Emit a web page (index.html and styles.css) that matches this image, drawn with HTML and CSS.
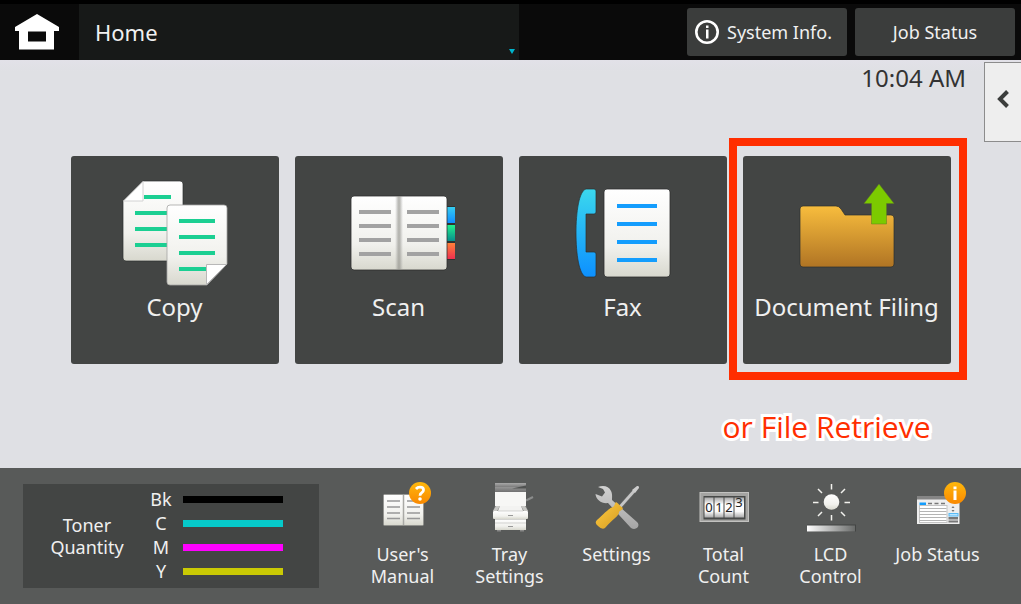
FILE: index.html
```html
<!DOCTYPE html>
<html lang="en">
<head>
  <meta charset="UTF-8" />
  <meta name="viewport" content="width=device-width, initial-scale=1.0" />
  <title>Home</title>
  <link rel="stylesheet" href="styles.css">
</head>
<body>
  <header class="topbar">
    <button class="home-btn" aria-label="Home">
      <svg width="46" height="40" viewBox="0 0 46 40">
        <path fill="#fff" fill-rule="evenodd" d="M23 2 L45 15 V19 H40 V37.500 H5 V19 H1 V15 Z M14 19.500 V29.500 H32 V19.500 Z" />
      </svg>
    </button>
    <button class="title-btn">
      <span>Home</span>
      <svg class="title-arrow" width="6" height="5" viewBox="0 0 6 5"><path fill="#00b4cc" d="M0 0 H6 L3 5 Z" /></svg>
    </button>
    <div class="top-actions">
      <button class="top-btn info-btn">
        <svg width="24" height="24" viewBox="0 0 24 24">
          <circle cx="12" cy="12" r="10.7" fill="none" stroke="#fff" stroke-width="2.6" />
          <path fill="#fff" d="M11 5.500h2.500v2.500h-2.500z M11 9.500h2.500v9h-2.500z" />
        </svg>
        System Info.
      </button>
      <button class="top-btn">Job Status</button>
    </div>
  </header>

  <main class="desktop">
    <div class="status-row">
      <time class="clock">10:04 AM</time>
      <button class="drawer" aria-label="Open panel">
        <svg width="14" height="20" viewBox="0 0 14 20"><path fill="none" stroke="#3b3d3c" stroke-width="4" d="M11.500 2.500 L4 10 L11.500 17.500" /></svg>
      </button>
    </div>

    <div class="tiles">
      <button class="tile">
        <svg width="112" height="112" viewBox="0 0 112 112">
          <defs>
            <linearGradient id="paper" x1="0" y1="0" x2="0" y2="1">
              <stop offset="0" stop-color="#fff" />
              <stop offset="0.65" stop-color="#f1f1ed" />
              <stop offset="1" stop-color="#d8d8ce" />
            </linearGradient>
          </defs>
          <path fill="url(#paper)" stroke="#2d2f2e" stroke-width="0.7" d="M24 5 H61 Q64 5 64 8 V85 H7 Q4 85 4 82 V25 Z" />
          <path fill="#fff" stroke="#d2d2d2" d="M24 5.500 V25 H4.500 Z" />
          <path fill="#1bcf92" d="M25 19h27v4H25z M16 35h32v4H16z M16 51h32v4H16z M16 67h32v4H16z" />
          <path fill="url(#paper)" stroke="#a5a5a3" stroke-width="0.8" d="M51 29 H105 Q108 29 108 32 V88 L88 109 H51 Q48 109 48 106 V32 Q48 29 51 29 Z" />
          <path fill="#1bcf92" d="M60 43h36v4H60z M60 59h36v4H60z M60 75h36v4H60z M60 91h28v4H60z" />
          <path fill="#fff" stroke="#b8b8b8" d="M107.500 88.500 H87.500 V108.500 Z" />
        </svg>
        <span class="tile-label">Copy</span>
      </button>
      <button class="tile">
        <svg width="112" height="112" viewBox="0 0 112 112">
          <defs>
            <linearGradient id="tabBlue" x1="0" y1="0" x2="0" y2="1"><stop offset="0" stop-color="#35cdf0" /><stop offset="1" stop-color="#108cff" /></linearGradient>
            <linearGradient id="tabGreen" x1="0" y1="0" x2="0" y2="1"><stop offset="0" stop-color="#22f08c" /><stop offset="1" stop-color="#088e8c" /></linearGradient>
            <linearGradient id="tabRed" x1="0" y1="0" x2="0" y2="1"><stop offset="0" stop-color="#ff8038" /><stop offset="1" stop-color="#ee3050" /></linearGradient>
            <linearGradient id="spine"><stop offset="0" stop-color="#999" stop-opacity="0" /><stop offset="0.4" stop-color="#8e8e88" stop-opacity="0.6" /><stop offset="0.6" stop-color="#8e8e88" stop-opacity="0.6" /><stop offset="1" stop-color="#999" stop-opacity="0" /></linearGradient>
          </defs>
          <path fill="#2f3130" d="M103 30h10v54h-10z" />
          <path fill="url(#tabBlue)" d="M104 31h8v16h-8z" />
          <path fill="url(#tabGreen)" d="M104 49h8v16h-8z" />
          <path fill="url(#tabRed)" d="M104 67h8v16h-8z" />
          <rect x="8" y="20" width="96" height="74" rx="3" fill="url(#paper)" stroke="#2d2f2e" stroke-width="0.8" />
          <rect x="52" y="20" width="8" height="74" fill="url(#spine)" />
          <path fill="#a2a2a2" d="M16 34h32v4H16z M16 48h32v4H16z M16 62h32v4H16z M16 76h32v4H16z M64 34h32v4H64z M64 48h32v4H64z M64 62h32v4H64z M64 76h32v4H64z" />
        </svg>
        <span class="tile-label">Scan</span>
      </button>
      <button class="tile">
        <svg width="112" height="112" viewBox="0 0 112 112">
          <defs>
            <linearGradient id="handset" x1="0" y1="0" x2="0" y2="1"><stop offset="0" stop-color="#3bd8ee" /><stop offset="1" stop-color="#0d90ff" /></linearGradient>
          </defs>
          <path fill="url(#handset)" stroke="#2d2f2e" stroke-width="0.7" d="M19 13 H27 Q29 13 29 15 V36 Q29 38 27 38 H19 V76 H27 Q29 76 29 78 V99 Q29 101 27 101 H19 C12 99 9 78 9 57 S12 15 19 13 Z" />
          <rect x="37" y="13" width="66" height="88" rx="3" fill="url(#paper)" stroke="#2d2f2e" stroke-width="0.8" />
          <path fill="#149dfd" d="M50 28h40v4H50z M50 46h40v4H50z M50 64h40v4H50z M50 82h40v4H50z" />
        </svg>
        <span class="tile-label">Fax</span>
      </button>
      <button class="tile highlighted">
        <svg width="112" height="112" viewBox="0 0 112 112">
          <defs>
            <linearGradient id="folder" x1="0" y1="0" x2="0" y2="1"><stop offset="0" stop-color="#f8bd3d" /><stop offset="1" stop-color="#b07424" /></linearGradient>
          </defs>
          <path fill="url(#folder)" stroke="#2d2f2e" stroke-width="0.7" d="M12 30 H45 Q48 30 50 33 L54 39 H100 Q103 39 103 42 V88 Q103 91 100 91 H12 Q9 91 9 88 V33 Q9 30 12 30 Z" />
          <path fill="#7cca00" stroke="#5d7a20" stroke-width="0.5" d="M88 8 L103 27.500 H95.500 V48 H80.500 V27.500 H73 Z" />
        </svg>
        <span class="tile-label">Document Filing</span>
      </button>
      <p class="note">or File Retrieve</p>
    </div>
  </main>

  <footer class="dock">
    <section class="toner">
      <h2 class="toner-title">Toner Quantity</h2>
      <ul class="toner-list">
        <li><span>Bk</span><i class="bar black"></i></li>
        <li><span>C</span><i class="bar cyan"></i></li>
        <li><span>M</span><i class="bar magenta"></i></li>
        <li><span>Y</span><i class="bar yellow"></i></li>
      </ul>
    </section>

    <nav class="dock-items">
      <button class="dock-btn">
        <svg width="64" height="56" viewBox="0 0 64 56">
          <defs>
            <linearGradient id="badge" x1="0" y1="0" x2="0" y2="1"><stop offset="0" stop-color="#ffb80c" /><stop offset="1" stop-color="#f98800" /></linearGradient>
          </defs>
          <rect x="12.500" y="14.500" width="40" height="31" rx="1" fill="url(#paper)" stroke="#8c8c88" stroke-width="0.6" />
          <path stroke="#a9a9a5" stroke-width="1.500" d="M32.500 15 V45" />
          <path stroke="#989898" stroke-width="1.500" d="M16 21h13 M16 27h13 M16 33h13 M16 38.500h13 M36 21h13 M36 27h13 M36 33h13 M36 38.500h13" />
          <circle cx="49" cy="13" r="11" fill="url(#badge)" />
          <path fill="none" stroke="#fff" stroke-width="2.800" d="M45 9 Q46.500 7.200 49 7.200 Q52.500 7.200 52.500 10 Q52.500 11.500 50.800 12.700 Q49 13.800 49 15.800" />
          <circle cx="49" cy="19" r="1.800" fill="#fff" />
        </svg>
        <span>User's<br>Manual</span>
      </button>
      <button class="dock-btn">
        <svg width="64" height="56" viewBox="0 0 64 56">
          <defs>
            <linearGradient id="lid" x1="0" y1="0" x2="0" y2="1"><stop offset="0" stop-color="#a8a8a8" /><stop offset="0.450" stop-color="#7c7c7c" /><stop offset="0.500" stop-color="#929292" /><stop offset="1" stop-color="#707070" /></linearGradient>
          </defs>
          <path stroke="#8b8d8c" stroke-width="2" d="M48 20.500 L55 17" />
          <path fill="#888" d="M19 50h4v1.500h-4z M42 50h4v1.500h-4z" />
          <rect x="17" y="3" width="31" height="9" fill="url(#lid)" />
          <path fill="#505251" d="M34 8.500 L48 5.500 V8.500 Z" />
          <rect x="17" y="12" width="31" height="14" fill="#f7f7f5" />
          <path fill="#8a8a88" d="M17 26 H48 L50 31 H15 Z" />
          <path fill="#c8c8c5" d="M18 26 L15 31 H19 L22 26 Z M47 26 L50 31 H46 L43 26 Z" />
          <path fill="#f3f3f1" d="M22 26 H43 L45 31 H20 Z" />
          <rect x="15" y="31" width="35" height="8" rx="1" fill="url(#paper)" />
          <rect x="17" y="39" width="31" height="11" fill="url(#paper)" />
          <path stroke="#c2c2be" stroke-width="0.700" d="M20 31h25 M17 39.500h31 M17 43h31" />
          <path stroke="#9a9a9a" d="M30 35.500h5 M30 46.500h5" />
        </svg>
        <span>Tray<br>Settings</span>
      </button>
      <button class="dock-btn">
        <svg width="64" height="56" viewBox="0 0 64 56">
          <defs>
            <linearGradient id="steel" x1="0" y1="0" x2="0" y2="1"><stop offset="0" stop-color="#d2d2d2" /><stop offset="1" stop-color="#a5a5a5" /></linearGradient>
            <linearGradient id="handle" x1="0" y1="0" x2="1" y2="1"><stop offset="0" stop-color="#ffcc42" /><stop offset="1" stop-color="#d49a20" /></linearGradient>
          </defs>
          <path fill="url(#steel)" d="M13 7 C18 5 24 6 26 11 C27.500 14 27 17 27 20 L52 42 C56 46 51 51 46 48 L23 23 C17 24 11 20 10.500 14 L17 16.500 L20 12.500 L18 9 Z" />
          <path stroke="#606261" stroke-width="4.500" d="M36 26 L49 11" />
          <path stroke="#c6c6c6" stroke-width="2.800" d="M34 28 L50 10" />
          <path fill="#cdcdcd" d="M47 10 L52 6 Q54.500 5.500 54 8 L50 13 Z" />
          <path fill="url(#handle)" d="M31 22 C33 23 34 25 38 28 C37 31 35 30 34 32 C34 36 29 38 20 48 Q17 50 13 46 Q9 43 12 40 C20 33 24 28 28 27 C30 26 29 24 31 22 Z" />
        </svg>
        <span>Settings</span>
      </button>
      <button class="dock-btn">
        <svg width="64" height="56" viewBox="0 0 64 56">
          <defs>
            <linearGradient id="wheel" x1="0" y1="0" x2="0" y2="1"><stop offset="0" stop-color="#aaa" /><stop offset="0.350" stop-color="#fff" /><stop offset="0.700" stop-color="#fafafa" /><stop offset="1" stop-color="#aaa" /></linearGradient>
          </defs>
          <rect x="8" y="12.500" width="48.500" height="29" fill="#a4a4a2" stroke="#c2c2c0" />
          <rect x="11.500" y="16" width="42" height="23.500" fill="#484a49" />
          <path fill="url(#wheel)" d="M12.500 17.500h9v20h-9z M22.500 17.500h9v20h-9z M32.500 17.500h9v20h-9z M42.500 17.500h9.500v20h-9.500z" />
          <g class="digits" text-anchor="middle">
            <text x="17" y="32">0</text>
            <text x="27" y="32">1</text>
            <text x="37" y="32">2</text>
            <text x="47" y="27">3</text>
          </g>
        </svg>
        <span>Total<br>Count</span>
      </button>
      <button class="dock-btn">
        <svg width="64" height="56" viewBox="0 0 64 56">
          <defs>
            <linearGradient id="ramp"><stop offset="0" stop-color="#fff" /><stop offset="1" stop-color="#696b6a" /></linearGradient>
          </defs>
          <circle cx="32.500" cy="22" r="7.800" fill="url(#paper)" />
          <path stroke="#f2f2ee" stroke-width="1.500" d="M32.500 4v5.500 M32.500 35v5.500 M14 22.500h5.500 M45.500 22.500h5.500 M19 9l4 4 M46 9l-4 4 M19 36l4-4 M46 36l-4-4" />
          <rect x="8" y="44.500" width="49" height="7" fill="#434544" />
          <rect x="8" y="45.500" width="48" height="6" fill="url(#ramp)" />
        </svg>
        <span>LCD<br>Control</span>
      </button>
      <button class="dock-btn">
        <svg width="64" height="56" viewBox="0 0 64 56">
          <rect x="11" y="16" width="42.500" height="28" fill="#eee" />
          <rect x="11" y="16" width="42.500" height="3.500" fill="#858585" />
          <rect x="13.500" y="22.500" width="6.500" height="2.500" fill="#149dfd" />
          <path stroke="#777" stroke-width="1.300" d="M22 23.500h4 M28.500 23.500h4 M35 23.500h4" />
          <rect x="13.500" y="25.500" width="27.500" height="17" fill="#fff" stroke="#c4c4c4" />
          <path stroke="#b4b4b4" d="M13.500 28.500h27 M13.500 31.500h27 M13.500 34.500h27 M13.500 37.500h27 M13.500 40.500h27" />
          <path fill="#777" d="M47 26l1.500 2h-3z M45.500 30h3l-1.500 2z M42.500 37h9.500v2.500h-9.500z M42.500 40.500h9.500v2h-9.500z" />
          <rect x="43" y="33.500" width="9" height="2.500" fill="#b8e4ff" stroke="#58baf5" />
          <circle cx="49" cy="13" r="11" fill="url(#badge)" />
          <path fill="#fff" d="M47.500 6.500h3v2.800h-3z M47.500 10.500h3v9.500h-3z" />
        </svg>
        <span>Job Status</span>
      </button>
    </nav>
  </footer>
</body>
</html>
```

FILE: styles.css
```css
* {
  box-sizing: border-box;
}

body {
  margin: 0;
  min-height: 100vh;
  display: flex;
  flex-direction: column;
  font-family: "Noto Sans", sans-serif;
  font-size: 18px;
  line-height: 22px;
  color: #f0f0f0;
  background: #dfe0e4;
}

button {
  margin: 0;
  padding: 0;
  border: none;
  background: none;
  font: inherit;
  color: inherit;
  cursor: pointer;
}

svg {
  display: block;
  flex: none;
}

/* top bar */
.topbar {
  display: flex;
  height: 60px;
  border-top: 4px solid #000;
  background: #0a0a0a;
}

.home-btn {
  width: 79px;
  padding: 0 0 0 14px;
}

.title-btn {
  flex: 0 1 440px;
  display: flex;
  align-items: center;
  justify-content: space-between;
  padding: 0 4px 0 16px;
  background: #171918;
  font-size: 22px;
}

.title-arrow {
  align-self: flex-end;
  margin-bottom: 6px;
}

.top-actions {
  display: flex;
  gap: 8px;
  margin-left: auto;
  padding: 4px 6px 4px 0;
}

.top-btn {
  display: flex;
  align-items: center;
  justify-content: center;
  gap: 8px;
  width: 160px;
  border-radius: 3px;
  background: #3b3d3c;
}

.info-btn {
  justify-content: flex-start;
  padding-left: 8px;
}

/* desktop */
.desktop {
  flex: 1;
  background: linear-gradient(#e2e1e8, #dfe0e4 12px);
}

.status-row {
  display: flex;
  justify-content: flex-end;
  gap: 18px;
  padding-top: 2px;
  color: #333;
}

.clock {
  font-size: 24px;
  line-height: 32px;
}

.drawer {
  display: flex;
  align-items: center;
  justify-content: center;
  width: 37px;
  height: 80px;
  padding-bottom: 6px;
  border: 1px solid #8c8c8c;
  border-right: none;
  background: #eee;
}

.tiles {
  display: grid;
  grid-template-columns: repeat(4, 208px);
  gap: 16px;
  justify-content: center;
  padding-top: 14px;
}

.tile {
  position: relative;
  display: flex;
  flex-direction: column;
  align-items: center;
  height: 208px;
  padding-top: 20px;
  border-radius: 3px;
  background: #434544;
}

.tile-label {
  font-size: 24px;
  line-height: 38px;
  white-space: nowrap;
}

.highlighted::after {
  content: "";
  position: absolute;
  inset: -18px -16px -16px -14px;
  border: 8px solid #ff2e00;
}

.note {
  grid-column: 3 / 5;
  justify-self: end;
  margin: 27px 20px 0 0;
  font-family: "Open Sans", sans-serif;
  font-size: 30px;
  line-height: 40px;
  color: #ff2e00;
  -webkit-text-stroke: 6px #fff;
  paint-order: stroke fill;
}

/* bottom dock */
.dock {
  display: flex;
  gap: 30px;
  min-height: 136px;
  padding: 0 30px 0 23px;
  background: #585a59;
}

.toner {
  display: flex;
  align-items: center;
  width: 296px;
  margin: 16px 0;
  padding: 0 36px 0 24px;
  background: #434544;
}

.toner-title {
  width: 80px;
  margin: 0;
  font-size: 18px;
  font-weight: normal;
  text-align: center;
}

.toner-list {
  flex: 1;
  margin: 0;
  padding: 0 0 2px 18px;
  list-style: none;
}

.toner-list li {
  display: flex;
  align-items: center;
  justify-content: space-between;
  line-height: 24px;
}

.toner-list span {
  width: 32px;
  text-align: center;
}

.bar {
  width: 100px;
  height: 7px;
}

.black {
  background: #000;
}

.cyan {
  background: #06c9ca;
}

.magenta {
  background: #f0f;
}

.yellow {
  background: #caca04;
}

.dock-items {
  flex: 1;
  display: grid;
  grid-template-columns: repeat(6, 1fr);
}

.dock-btn {
  display: flex;
  flex-direction: column;
  align-items: center;
  gap: 7px;
  padding: 12px 0 16px;
  white-space: nowrap;
}

.digits {
  font-size: 13px;
  fill: #222;
}
```
